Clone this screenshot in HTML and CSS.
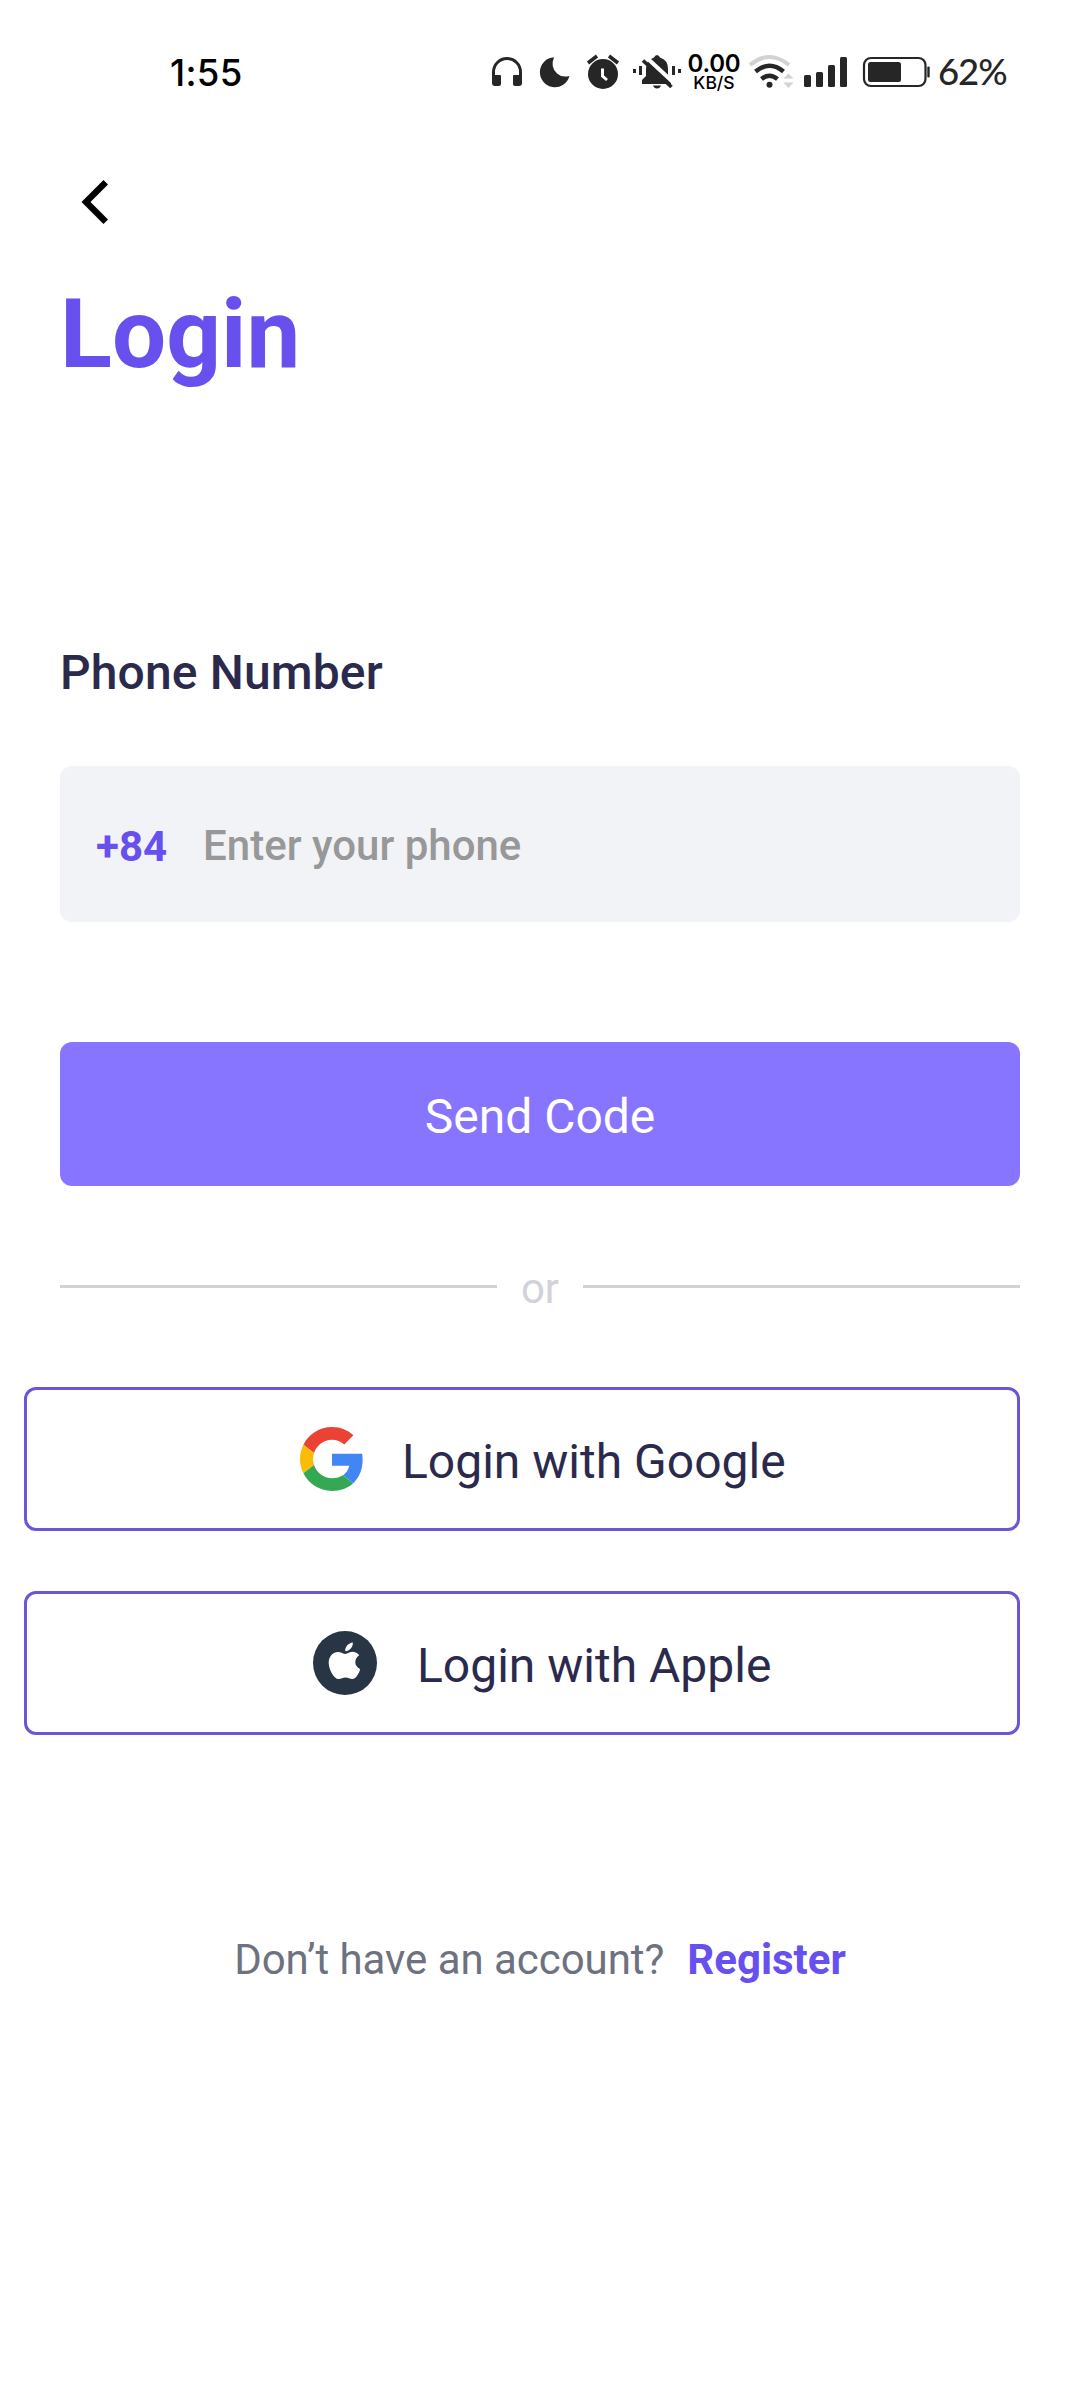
FILE: index.html
```html
<!DOCTYPE html>
<html lang="en">
<head>
<meta charset="utf-8">
<title>Login</title>
<link rel="stylesheet" href="styles.css">
</head>
<body>
<header class="status">
  <span class="clock">1:55</span>
  <div class="indicators">
    <svg class="ic headphones" viewBox="490 50 34 42"><path d="M493.500 82V72a13.500 13.500 0 0 1 27 0v10" fill="none" stroke="#262626" stroke-width="3"/><path d="M492 75h8q1 0 1 1v8q0 2-2 2h-4q-3 0-3-3zM522 75h-8q-1 0-1 1v8q0 2 2 2h4q3 0 3-3z"/></svg>
    <svg class="ic moon" viewBox="538 50 34 42"><path d="M554 57.3A15 15 0 1 0 569.4 76Q562 78 557 73.500Q550 67 554 57.300z"/></svg>
    <svg class="ic alarm" viewBox="585 50 36 42"><circle cx="603" cy="74" r="15"/><path d="M588 63l9-7M618 63l-9-7" stroke="#262626" stroke-width="3.600"/><path d="M602.500 68.500v7.500l4.500 4" fill="none" stroke="#fff" stroke-width="3"/></svg>
    <svg class="ic bell" viewBox="631 50 52 42"><path d="M642 84v-4l4-4V69q0-9 8-11.500q1-2.500 3-2.500t3 2.500q8 2.500 8 11.500v7l3 4v4zM653 85.500h8q-1 3-4 3t-4-3z"/><path d="M646.500 57.500l29 27" stroke="#fff" stroke-width="4"/><path d="M643 60.500l28.500 26.500" stroke="#262626" stroke-width="3.600"/><path d="M633 69h3v4h-3zM639 66h3v9h-3zM672 66h3v9h-3zM678 69h3v4h-3z"/></svg>
    <div class="speed"><span class="rate">0.00</span><span class="unit">KB/S</span></div>
    <svg class="ic wifi" viewBox="747 50 48 42"><g fill="none" stroke="#262626" stroke-width="4.500"><path d="M750 65q19.500-16 39 0" stroke="#d2d2d2" stroke-width="4"/><path d="M755.500 71.500q14-11.500 28 0"/><path d="M761.500 79q8-6.500 16 0"/></g><circle cx="769.500" cy="84.700" r="3"/><path d="M783.500 78.500l5-5 5 5zM783.500 82.500l5 5.500 5-5.500z" fill="#d2d2d2"/></svg>
    <svg class="ic signal" viewBox="802 50 47 42"><rect x="804" y="75" width="7" height="12" rx="1.500"/><rect x="816" y="72" width="7" height="15" rx="1.500"/><rect x="828" y="65" width="7" height="22" rx="1.500"/><rect x="840" y="57" width="7" height="30" rx="1.500"/></svg>
    <svg class="ic battery" viewBox="861 50 71 42"><rect x="864" y="58" width="61.500" height="28" rx="7" fill="none" stroke="#262626" stroke-width="2.200"/><rect x="868" y="62" width="33" height="20" rx="2.500"/><rect x="927.300" y="66.500" width="2.400" height="11" rx="1"/></svg>
    <span class="percent">62%</span>
  </div>
</header>
<main class="screen">
  <button class="back" aria-label="Back"><svg viewBox="0 0 28 46"><path d="M22.500 1L27 5.500 9.500 23 27 40.500 22.500 45 .500 23z"/></svg></button>
  <h1 class="title">Login</h1>
  <label class="label">Phone Number</label>
  <div class="field"><span class="prefix">+84</span><span class="placeholder">Enter your phone</span></div>
  <button class="send">Send Code</button>
  <div class="divider"><span class="or">or</span></div>
  <button class="social google">
    <svg class="logo" viewBox="0 0 48 48"><path fill="#EA4335" d="M24 9.500c3.540 0 6.710 1.220 9.210 3.600l6.850-6.850C35.900 2.380 30.470 0 24 0 14.620 0 6.510 5.380 2.560 13.220l7.980 6.190C12.430 13.720 17.740 9.500 24 9.500z"/><path fill="#4285F4" d="M46.980 24.550c0-1.570-.150-3.090-.380-4.550H24v9.020h12.940c-.580 2.960-2.260 5.480-4.780 7.180l7.730 6c4.510-4.180 7.090-10.360 7.090-17.650z"/><path fill="#FBBC05" d="M10.530 28.590c-.480-1.450-.760-2.990-.760-4.590s.270-3.140.760-4.590l-7.980-6.190C.920 16.460 0 20.120 0 24c0 3.880.920 7.540 2.560 10.780l7.970-6.190z"/><path fill="#34A853" d="M24 48c6.480 0 11.930-2.130 15.890-5.810l-7.730-6c-2.150 1.450-4.920 2.300-8.160 2.300-6.260 0-11.570-4.220-13.470-9.910l-7.980 6.190C6.510 42.620 14.620 48 24 48z"/></svg>
    <span class="social-text">Login with Google</span>
  </button>
  <button class="social apple">
    <svg class="logo" viewBox="0 0 64 64"><circle cx="32" cy="32" r="32" fill="#283544"/><path fill="#fff" d="M32.300 20.200c-.500-4.600 3.300-8.300 7.500-8.800.400 4.700-3.100 8.500-7.500 8.800zM46.200 24.300c-5.500 3.600-5.100 11 1 13.900-1.200 3.900-4.100 9.600-7.800 9.900-2.500.100-4-1.500-6.800-1.500-2.900 0-4.500 1.600-7 1.500-4.600-.300-9.800-9.600-9.900-15.900-.100-7 4.300-11.200 9.300-11.300 3 0 5.500 2 7.400 2 1.800 0 5-2.300 8.300-2 2.100.200 4.200 1.200 5.500 3.400z"/></svg>
    <span class="social-text">Login with Apple</span>
  </button>
  <p class="signup"><span class="question">Don’t have an account?</span><a class="register">Register</a></p>
</main>
</body>
</html>
```
FILE: styles.css
```css
* { box-sizing: border-box; }
body { margin: 0; width: 1080px; height: 2400px; overflow: hidden; background: #fff; font-family: Roboto, sans-serif; }
button { border: 0; margin: 0; padding: 0; background: none; font: inherit; }
svg { display: block; flex: none; }

.status { display: flex; justify-content: space-between; height: 142px; padding: 50px 72px 0 170px; color: #000; font-family: Inter, sans-serif; }
.clock { font-size: 36.5px; line-height: 46px; font-weight: 500; letter-spacing: .3px; }
.indicators { display: flex; align-items: flex-start; width: 518px; }
.ic { height: 42px; fill: #262626; }
.headphones { width: 34px; margin-right: 14px; }
.moon { width: 34px; margin-right: 13px; }
.alarm { width: 36px; margin-right: 10px; }
.bell { width: 52px; margin-right: 2px; }
.speed { display: flex; flex: none; flex-direction: column; align-items: center; width: 58px; margin-right: 4px; padding-top: 4px; }
.rate { font-size: 24px; line-height: 20px; font-weight: 600; letter-spacing: -.2px; }
.unit { font-size: 17.5px; line-height: 17px; font-weight: 500; }
.wifi { width: 48px; margin-right: 7px; }
.signal { width: 47px; margin-right: 12px; }
.battery { width: 71px; margin-right: 6px; }
.percent { color: #262626; font-family: Lato, sans-serif; font-size: 36.5px; line-height: 43px; font-weight: 500; letter-spacing: -1.1px; }

.screen { display: flex; flex-direction: column; padding: 0 60px; }
.back { width: 28px; height: 46px; margin: 37px 0 0 21px; }
.back svg { width: 28px; height: 46px; }
.title { margin: 49px 0 0; font-size: 96px; line-height: 120px; font-weight: 700; color: #6750ee; }
.label { margin-top: 249px; font-size: 48px; line-height: 60px; font-weight: 500; letter-spacing: .14px; color: #2b2a4c; }
.field { display: flex; align-items: center; height: 156px; margin-top: 63px; padding: 2px 36px 0; border-radius: 12px; background: #f2f3f6; font-size: 42px; }
.prefix { margin-top: 2px; font-weight: 700; color: #6750ee; }
.placeholder { margin-left: 36px; font-weight: 500; color: #989898; }
.send { height: 144px; margin-top: 120px; padding-top: 5px; border-radius: 12px; background: #8875ff; color: #fff; font-size: 48px; }
.divider { display: flex; align-items: center; gap: 24px; height: 51px; margin-top: 75px; color: #d1d3d9; font-size: 42px; }
.divider::before, .divider::after { content: ""; flex: 1; height: 3px; background: #d1d3d9; }
.or { line-height: 47px; padding-top: 4px; }
.social { display: flex; align-items: center; height: 144px; margin-left: -36px; border: 3px solid #6a56d6; border-radius: 12px; color: #2b2a4c; font-size: 48px; }
.google { margin-top: 75px; padding-left: 273px; }
.apple { margin-top: 60px; padding-left: 286px; }
.logo { width: 64px; height: 64px; }
.social-text { margin-left: 38px; padding-top: 5px; }
.apple .social-text { margin-left: 40px; }
.signup { display: flex; justify-content: center; align-items: baseline; margin: 200px 0 0; font-size: 42px; line-height: 50px; color: #6c7280; }
.question { letter-spacing: -.05px; }
.register { margin-left: 23px; font-weight: 700; color: #6750ee; }
```
